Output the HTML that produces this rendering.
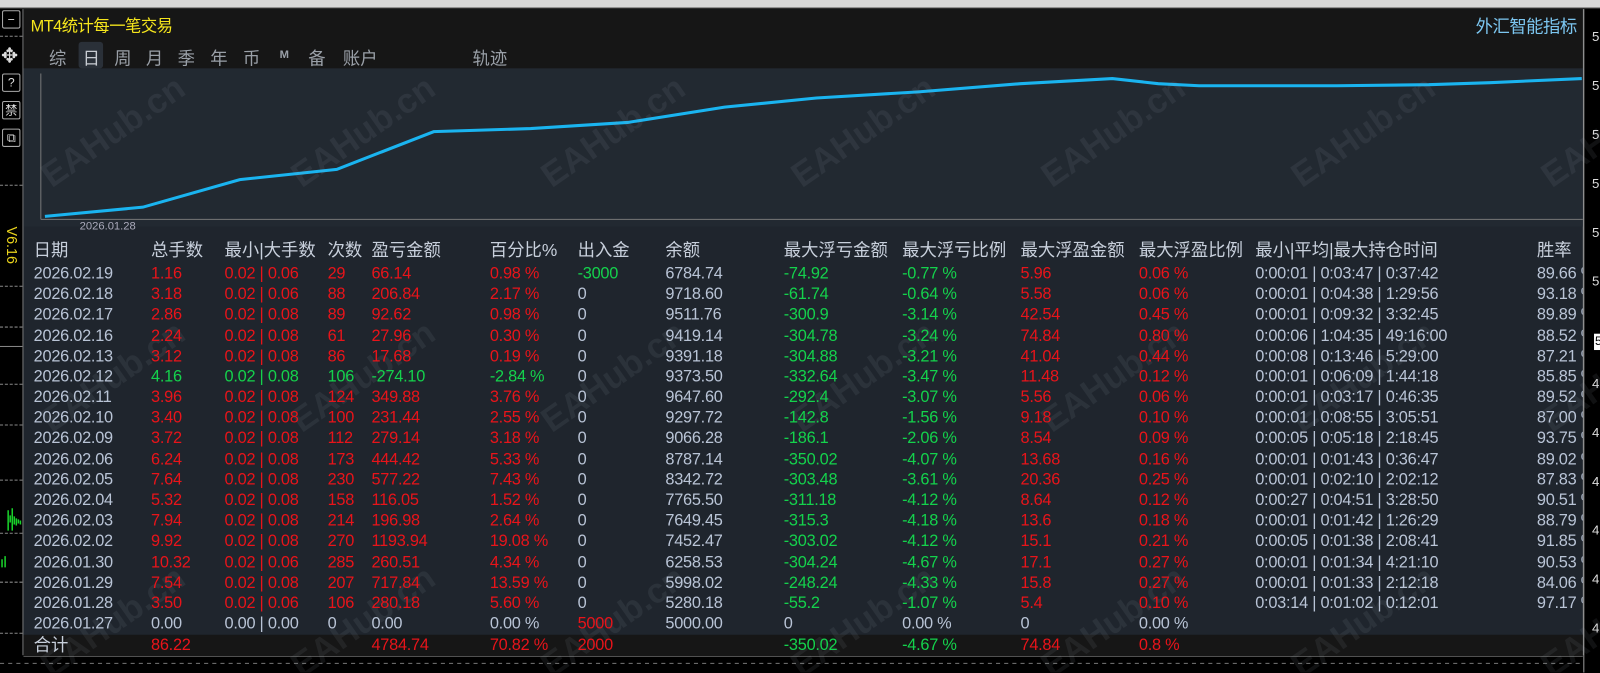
<!DOCTYPE html>
<html><head><meta charset="utf-8"><style>
*{margin:0;padding:0;box-sizing:border-box}
body{width:1600px;height:672px;background:#000;position:relative;overflow:hidden;font-family:"Liberation Sans","Noto Sans CJK SC",sans-serif}
#wrap{position:absolute;left:0;top:0;width:1568px;height:659px;transform:scale(1.0205);transform-origin:0 0;overflow:hidden}
.abs{position:absolute}
#top{left:0;top:0;width:1568px;height:8px;background:#d8d8d8;border-bottom:1px solid #888}
#panel{left:22px;top:9px;width:1530px;height:633px;background:#1f252d;border-left:1px solid #777;border-right:1px solid #777}
#hdr{left:23px;top:9px;width:1528px;height:58px;background:#161616}
#chart{left:23px;top:67px;width:1528px;height:155px;background:#222931}
.row{position:absolute;left:0;width:1551px;overflow:hidden;height:20px;font-size:16px;line-height:20px;color:#b9c4d6;letter-spacing:-0.25px}
.row span{position:absolute;white-space:nowrap}
.r{color:#e8141a}.g{color:#14d24c}
.c1{left:33px}.c2{left:148px}.c3{left:220px}.c4{left:321px}.c5{left:364px}.c6{left:480px}.c7{left:566px}.c8{left:652px}.c9{left:768px}.c10{left:884px}.c11{left:1000px}.c12{left:1116px}.c13{left:1230px}.c14{left:1506px}
.th{font-size:17px;color:#c8d0dc;letter-spacing:0}
.tab{position:absolute;top:43px;font-size:17px;color:#9aa0a8}
.wm{position:absolute;font-size:34px;font-weight:bold;color:rgba(160,170,180,0.1);transform:rotate(-35deg);white-space:nowrap}
.icon{position:absolute;left:2px;width:18px;height:18px;border:1px solid #aaa;border-radius:2px;color:#ddd;font-size:12px;text-align:center;line-height:16px}
.dash{position:absolute;left:0;width:22px;border-top:1px dashed #888}
.ax{position:absolute;left:1560px;color:#ddd;font-size:13px}
</style></head><body><div id="wrap">
<div id="top" class="abs"></div>
<div id="panel" class="abs"></div>
<div id="hdr" class="abs"></div>
<div id="chart" class="abs"></div>
<div class="abs" style="left:30px;top:12px;font-size:16px;color:#f5e51c;letter-spacing:-0.5px">MT4统计每一笔交易</div>
<div class="abs" style="left:1446px;top:12px;font-size:17px;color:#7cc6f0;letter-spacing:-0.5px">外汇智能指标</div>
<div class="tab" style="left:48px">综</div>
<div class="abs" style="left:77px;top:41px;width:24px;height:26px;background:#2a3038;border-radius:3px"></div>
<div class="tab" style="left:81px;color:#c8ccd2">日</div>
<div class="tab" style="left:112px">周</div>
<div class="tab" style="left:143px">月</div>
<div class="tab" style="left:174px">季</div>
<div class="tab" style="left:206px">年</div>
<div class="tab" style="left:238px">币</div>
<div class="tab" style="left:274px;font-size:11px;top:48px;font-weight:bold">M</div>
<div class="tab" style="left:302px">备</div>
<div class="tab" style="left:336px">账户</div>
<div class="tab" style="left:463px">轨迹</div>
<svg class="abs" style="left:0;top:0" width="1568" height="659">
<line x1="40" y1="72" x2="40" y2="215" stroke="#777" stroke-width="1"/>
<line x1="40" y1="215" x2="1551" y2="215" stroke="#777" stroke-width="1"/>
<polyline fill="none" stroke="#1ab4f0" stroke-width="3" points="44,212 140,203 235,176 330,166 425,129 520,126 615,120 710,105 800,96 900,90 1000,82 1090,77 1135,82 1175,84 1310,84 1400,83 1460,81 1550,77"/>
<line x1="23" y1="643" x2="1551" y2="643" stroke="#888"/>
<line x1="0" y1="650" x2="1552" y2="650" stroke="#777" stroke-dasharray="4,4"/>
<line x1="1552" y1="9" x2="1552" y2="659" stroke="#999"/>
<path d="M8 500 V520 M10 505 V512 M12 498 V520 M14 506 V514 M16 508 V515 M18 509 V513 M20 510 V514 M2 548 V556 M5 545 V556" stroke="#19d12a" stroke-width="1.5"/>
</svg>
<div class="abs" style="left:78px;top:216px;font-size:11px;color:#aab">2026.01.28</div>
<div class="icon" style="top:10px">−</div>
<div class="abs" style="left:1px;top:42px;color:#ddd;font-size:20px">✥</div>
<div class="icon" style="top:72px">?</div>
<div class="icon" style="top:99px">禁</div>
<div class="icon" style="top:126px">⧉</div>
<div class="dash" style="top:35px"></div><div class="dash" style="top:181px"></div><div class="dash" style="top:280px"></div><div class="dash" style="top:320px"></div><div class="dash" style="top:376px"></div><div class="dash" style="top:416px"></div><div class="dash" style="top:470px"></div><div class="dash" style="top:522px"></div><div class="dash" style="top:570px"></div><div class="dash" style="top:620px"></div>
<div class="abs" style="left:0;top:339px;width:22px;border-top:1px solid #888"></div>
<div class="abs" style="top:222px;color:#e8d21c;font-size:14px;transform:rotate(90deg);transform-origin:left top;left:20px">V6.16</div>
<div class="ax" style="top:28px">5</div><div class="ax" style="top:76px">5</div><div class="ax" style="top:124px">5</div><div class="ax" style="top:172px">5</div><div class="ax" style="top:220px">5</div><div class="ax" style="top:268px">5</div>
<div class="abs" style="left:1562px;top:327px;width:10px;height:16px;background:#fff;color:#000;font-size:12px;padding-left:1px">5</div>
<div class="ax" style="top:368px">4</div><div class="ax" style="top:416px">4</div><div class="ax" style="top:464px">4</div><div class="ax" style="top:512px">4</div><div class="ax" style="top:560px">4</div><div class="ax" style="top:608px">4</div>

<div class="abs" style="left:23px;top:622px;width:1528px;height:21px;background:#161616"></div>

<div class="wm" style="left:30px;top:110px">EAHub.cn</div><div class="wm" style="left:275px;top:110px">EAHub.cn</div><div class="wm" style="left:520px;top:110px">EAHub.cn</div><div class="wm" style="left:765px;top:110px">EAHub.cn</div><div class="wm" style="left:1010px;top:110px">EAHub.cn</div><div class="wm" style="left:1255px;top:110px">EAHub.cn</div><div class="wm" style="left:1500px;top:110px">EAHub.cn</div>
<div class="wm" style="left:30px;top:350px">EAHub.cn</div><div class="wm" style="left:275px;top:350px">EAHub.cn</div><div class="wm" style="left:520px;top:350px">EAHub.cn</div><div class="wm" style="left:765px;top:350px">EAHub.cn</div><div class="wm" style="left:1010px;top:350px">EAHub.cn</div><div class="wm" style="left:1255px;top:350px">EAHub.cn</div><div class="wm" style="left:1500px;top:350px">EAHub.cn</div>
<div class="wm" style="left:30px;top:590px">EAHub.cn</div><div class="wm" style="left:275px;top:590px">EAHub.cn</div><div class="wm" style="left:520px;top:590px">EAHub.cn</div><div class="wm" style="left:765px;top:590px">EAHub.cn</div><div class="wm" style="left:1010px;top:590px">EAHub.cn</div><div class="wm" style="left:1255px;top:590px">EAHub.cn</div><div class="wm" style="left:1500px;top:590px">EAHub.cn</div>

<div class="row th" style="top:235px;height:22px;line-height:22px"><span class="c1">日期</span><span class="c2">总手数</span><span class="c3">最小|大手数</span><span class="c4">次数</span><span class="c5">盈亏金额</span><span class="c6">百分比%</span><span class="c7">出入金</span><span class="c8">余额</span><span class="c9">最大浮亏金额</span><span class="c10">最大浮亏比例</span><span class="c11">最大浮盈金额</span><span class="c12">最大浮盈比例</span><span class="c13">最小|平均|最大持仓时间</span><span class="c14">胜率</span></div>

<div class="row" style="top:259px"><span class="c1">2026.02.19</span><span class="c2 r">1.16</span><span class="c3 r">0.02 | 0.06</span><span class="c4 r">29</span><span class="c5 r">66.14</span><span class="c6 r">0.98 %</span><span class="c7 g">-3000</span><span class="c8">6784.74</span><span class="c9 g">-74.92</span><span class="c10 g">-0.77 %</span><span class="c11 r">5.96</span><span class="c12 r">0.06 %</span><span class="c13">0:00:01 | 0:03:47 | 0:37:42</span><span class="c14">89.66 %</span></div>
<div class="row" style="top:279px"><span class="c1">2026.02.18</span><span class="c2 r">3.18</span><span class="c3 r">0.02 | 0.06</span><span class="c4 r">88</span><span class="c5 r">206.84</span><span class="c6 r">2.17 %</span><span class="c7">0</span><span class="c8">9718.60</span><span class="c9 g">-61.74</span><span class="c10 g">-0.64 %</span><span class="c11 r">5.58</span><span class="c12 r">0.06 %</span><span class="c13">0:00:01 | 0:04:38 | 1:29:56</span><span class="c14">93.18 %</span></div>
<div class="row" style="top:299px"><span class="c1">2026.02.17</span><span class="c2 r">2.86</span><span class="c3 r">0.02 | 0.08</span><span class="c4 r">89</span><span class="c5 r">92.62</span><span class="c6 r">0.98 %</span><span class="c7">0</span><span class="c8">9511.76</span><span class="c9 g">-300.9</span><span class="c10 g">-3.14 %</span><span class="c11 r">42.54</span><span class="c12 r">0.45 %</span><span class="c13">0:00:01 | 0:09:32 | 3:32:45</span><span class="c14">89.89 %</span></div>
<div class="row" style="top:320px"><span class="c1">2026.02.16</span><span class="c2 r">2.24</span><span class="c3 r">0.02 | 0.08</span><span class="c4 r">61</span><span class="c5 r">27.96</span><span class="c6 r">0.30 %</span><span class="c7">0</span><span class="c8">9419.14</span><span class="c9 g">-304.78</span><span class="c10 g">-3.24 %</span><span class="c11 r">74.84</span><span class="c12 r">0.80 %</span><span class="c13">0:00:06 | 1:04:35 | 49:16:00</span><span class="c14">88.52 %</span></div>
<div class="row" style="top:340px"><span class="c1">2026.02.13</span><span class="c2 r">3.12</span><span class="c3 r">0.02 | 0.08</span><span class="c4 r">86</span><span class="c5 r">17.68</span><span class="c6 r">0.19 %</span><span class="c7">0</span><span class="c8">9391.18</span><span class="c9 g">-304.88</span><span class="c10 g">-3.21 %</span><span class="c11 r">41.04</span><span class="c12 r">0.44 %</span><span class="c13">0:00:08 | 0:13:46 | 5:29:00</span><span class="c14">87.21 %</span></div>
<div class="row" style="top:360px"><span class="c1">2026.02.12</span><span class="c2 g">4.16</span><span class="c3 g">0.02 | 0.08</span><span class="c4 g">106</span><span class="c5 g">-274.10</span><span class="c6 g">-2.84 %</span><span class="c7">0</span><span class="c8">9373.50</span><span class="c9 g">-332.64</span><span class="c10 g">-3.47 %</span><span class="c11 r">11.48</span><span class="c12 r">0.12 %</span><span class="c13">0:00:01 | 0:06:09 | 1:44:18</span><span class="c14">85.85 %</span></div>
<div class="row" style="top:380px"><span class="c1">2026.02.11</span><span class="c2 r">3.96</span><span class="c3 r">0.02 | 0.08</span><span class="c4 r">124</span><span class="c5 r">349.88</span><span class="c6 r">3.76 %</span><span class="c7">0</span><span class="c8">9647.60</span><span class="c9 g">-292.4</span><span class="c10 g">-3.07 %</span><span class="c11 r">5.56</span><span class="c12 r">0.06 %</span><span class="c13">0:00:01 | 0:03:17 | 0:46:35</span><span class="c14">89.52 %</span></div>
<div class="row" style="top:400px"><span class="c1">2026.02.10</span><span class="c2 r">3.40</span><span class="c3 r">0.02 | 0.08</span><span class="c4 r">100</span><span class="c5 r">231.44</span><span class="c6 r">2.55 %</span><span class="c7">0</span><span class="c8">9297.72</span><span class="c9 g">-142.8</span><span class="c10 g">-1.56 %</span><span class="c11 r">9.18</span><span class="c12 r">0.10 %</span><span class="c13">0:00:01 | 0:08:55 | 3:05:51</span><span class="c14">87.00 %</span></div>
<div class="row" style="top:420px"><span class="c1">2026.02.09</span><span class="c2 r">3.72</span><span class="c3 r">0.02 | 0.08</span><span class="c4 r">112</span><span class="c5 r">279.14</span><span class="c6 r">3.18 %</span><span class="c7">0</span><span class="c8">9066.28</span><span class="c9 g">-186.1</span><span class="c10 g">-2.06 %</span><span class="c11 r">8.54</span><span class="c12 r">0.09 %</span><span class="c13">0:00:05 | 0:05:18 | 2:18:45</span><span class="c14">93.75 %</span></div>
<div class="row" style="top:441px"><span class="c1">2026.02.06</span><span class="c2 r">6.24</span><span class="c3 r">0.02 | 0.08</span><span class="c4 r">173</span><span class="c5 r">444.42</span><span class="c6 r">5.33 %</span><span class="c7">0</span><span class="c8">8787.14</span><span class="c9 g">-350.02</span><span class="c10 g">-4.07 %</span><span class="c11 r">13.68</span><span class="c12 r">0.16 %</span><span class="c13">0:00:01 | 0:01:43 | 0:36:47</span><span class="c14">89.02 %</span></div>
<div class="row" style="top:461px"><span class="c1">2026.02.05</span><span class="c2 r">7.64</span><span class="c3 r">0.02 | 0.08</span><span class="c4 r">230</span><span class="c5 r">577.22</span><span class="c6 r">7.43 %</span><span class="c7">0</span><span class="c8">8342.72</span><span class="c9 g">-303.48</span><span class="c10 g">-3.61 %</span><span class="c11 r">20.36</span><span class="c12 r">0.25 %</span><span class="c13">0:00:01 | 0:02:10 | 2:02:12</span><span class="c14">87.83 %</span></div>
<div class="row" style="top:481px"><span class="c1">2026.02.04</span><span class="c2 r">5.32</span><span class="c3 r">0.02 | 0.08</span><span class="c4 r">158</span><span class="c5 r">116.05</span><span class="c6 r">1.52 %</span><span class="c7">0</span><span class="c8">7765.50</span><span class="c9 g">-311.18</span><span class="c10 g">-4.12 %</span><span class="c11 r">8.64</span><span class="c12 r">0.12 %</span><span class="c13">0:00:27 | 0:04:51 | 3:28:50</span><span class="c14">90.51 %</span></div>
<div class="row" style="top:501px"><span class="c1">2026.02.03</span><span class="c2 r">7.94</span><span class="c3 r">0.02 | 0.08</span><span class="c4 r">214</span><span class="c5 r">196.98</span><span class="c6 r">2.64 %</span><span class="c7">0</span><span class="c8">7649.45</span><span class="c9 g">-315.3</span><span class="c10 g">-4.18 %</span><span class="c11 r">13.6</span><span class="c12 r">0.18 %</span><span class="c13">0:00:01 | 0:01:42 | 1:26:29</span><span class="c14">88.79 %</span></div>
<div class="row" style="top:521px"><span class="c1">2026.02.02</span><span class="c2 r">9.92</span><span class="c3 r">0.02 | 0.08</span><span class="c4 r">270</span><span class="c5 r">1193.94</span><span class="c6 r">19.08 %</span><span class="c7">0</span><span class="c8">7452.47</span><span class="c9 g">-303.02</span><span class="c10 g">-4.12 %</span><span class="c11 r">15.1</span><span class="c12 r">0.21 %</span><span class="c13">0:00:05 | 0:01:38 | 2:08:41</span><span class="c14">91.85 %</span></div>
<div class="row" style="top:542px"><span class="c1">2026.01.30</span><span class="c2 r">10.32</span><span class="c3 r">0.02 | 0.06</span><span class="c4 r">285</span><span class="c5 r">260.51</span><span class="c6 r">4.34 %</span><span class="c7">0</span><span class="c8">6258.53</span><span class="c9 g">-304.24</span><span class="c10 g">-4.67 %</span><span class="c11 r">17.1</span><span class="c12 r">0.27 %</span><span class="c13">0:00:01 | 0:01:34 | 4:21:10</span><span class="c14">90.53 %</span></div>
<div class="row" style="top:562px"><span class="c1">2026.01.29</span><span class="c2 r">7.54</span><span class="c3 r">0.02 | 0.08</span><span class="c4 r">207</span><span class="c5 r">717.84</span><span class="c6 r">13.59 %</span><span class="c7">0</span><span class="c8">5998.02</span><span class="c9 g">-248.24</span><span class="c10 g">-4.33 %</span><span class="c11 r">15.8</span><span class="c12 r">0.27 %</span><span class="c13">0:00:01 | 0:01:33 | 2:12:18</span><span class="c14">84.06 %</span></div>
<div class="row" style="top:582px"><span class="c1">2026.01.28</span><span class="c2 r">3.50</span><span class="c3 r">0.02 | 0.06</span><span class="c4 r">106</span><span class="c5 r">280.18</span><span class="c6 r">5.60 %</span><span class="c7">0</span><span class="c8">5280.18</span><span class="c9 g">-55.2</span><span class="c10 g">-1.07 %</span><span class="c11 r">5.4</span><span class="c12 r">0.10 %</span><span class="c13">0:03:14 | 0:01:02 | 0:12:01</span><span class="c14">97.17 %</span></div>
<div class="row" style="top:602px"><span class="c1">2026.01.27</span><span class="c2">0.00</span><span class="c3">0.00 | 0.00</span><span class="c4">0</span><span class="c5">0.00</span><span class="c6">0.00 %</span><span class="c7 r">5000</span><span class="c8">5000.00</span><span class="c9">0</span><span class="c10">0.00 %</span><span class="c11">0</span><span class="c12">0.00 %</span></div>
<div class="row" style="top:623px"><span class="c1 th">合计</span><span class="c2 r">86.22</span><span class="c5 r">4784.74</span><span class="c6 r">70.82 %</span><span class="c7 r">2000</span><span class="c9 g">-350.02</span><span class="c10 g">-4.67 %</span><span class="c11 r">74.84</span><span class="c12 r">0.8 %</span></div>
</div></body></html>
